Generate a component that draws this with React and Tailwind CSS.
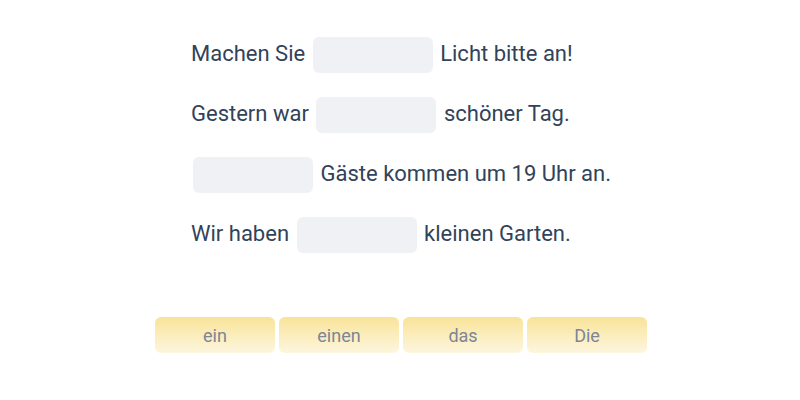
import React from "react";

const sentences = [
  { before: "Machen Sie", after: "Licht bitte an!" },
  { before: "Gestern war", after: "schöner Tag." },
  { before: "", after: "Gäste kommen um 19 Uhr an." },
  { before: "Wir haben", after: "kleinen Garten." },
];

const words = ["ein", "einen", "das", "Die"];

const Blank = () => (
  <span className="inline-block shrink-0 w-[120px] h-[36px] rounded-md bg-[#f0f1f5]" />
);

export default function App() {
  return (
    <div
      className="w-[800px] h-[400px] bg-white flex flex-col items-center"
      style={{ fontFamily: "Roboto, sans-serif" }}
    >
      <div className="w-[418px] pt-[37px] flex flex-col gap-6">
        {sentences.map((s, i) => (
          <div
            key={i}
            className="flex items-center gap-[7.5px] h-[36px] whitespace-nowrap text-[22px] text-[#314359]"
          >
            {s.before ? <span className="pb-[3px]">{s.before}</span> : <span className="w-0 -mr-[5.5px]" />}
            <Blank />
            <span className="pb-[3px]">{s.after}</span>
          </div>
        ))}
      </div>
      <div className="mt-[64px] flex gap-1 ml-[2px]">
        {words.map((w) => (
          <button
            key={w}
            className="w-[120px] h-[36px] rounded-md bg-gradient-to-b from-[#f9e398] to-[#fdf6dd] text-[18px] text-[#7d8696]"
          >
            {w}
          </button>
        ))}
      </div>
    </div>
  );
}
